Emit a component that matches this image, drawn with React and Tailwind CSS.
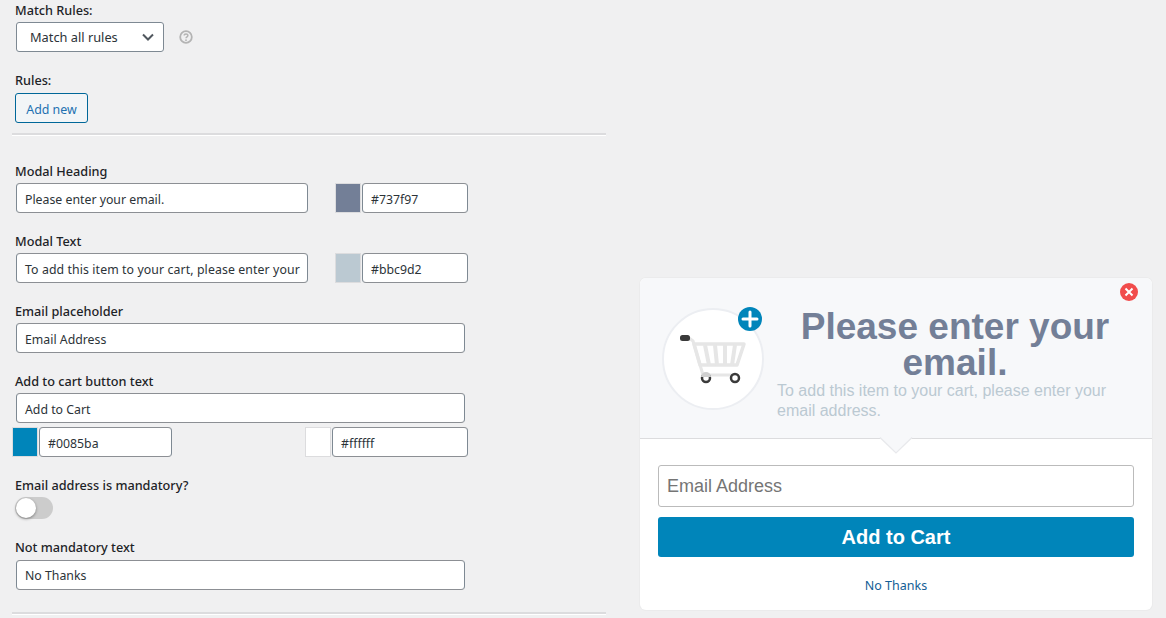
import React from "react";

const Label = ({ children, className = "" }) => (
  <div className={`text-[12.7px] leading-[18px] font-medium text-[#1d2327] ${className}`}>{children}</div>
);

const Field = ({ children, className = "" }) => (
  <div className={`h-[30px] bg-white border border-[#8c8f94] border-x-[#7e8993] rounded-[4px] px-2 text-[12.3px] leading-[31px] text-[#2c3338] overflow-hidden whitespace-nowrap ${className}`}>
    {children}
  </div>
);

const ColorField = ({ color, value, fieldWidth, className = "" }) => (
  <div className={`flex h-[30px] gap-px ${className}`}>
    <div className="w-[26px] h-[30px] border border-[#dcdcde]" style={{ backgroundColor: color }} />
    <Field className={fieldWidth}>{value}</Field>
  </div>
);

const CartIcon = () => (
  <svg width="102" height="102" viewBox="0 0 102 102" className="block">
    <circle cx="51" cy="51" r="50" fill="#ffffff" stroke="#eceef2" strokeWidth="2" />
    <path d="M27 30 L31 33 L41 67 H76" fill="none" stroke="#e6e6e6" strokeWidth="3" />
    <path d="M32 36 H82 L75 57 H38 Z" fill="none" stroke="#e6e6e6" strokeWidth="3.5" strokeLinejoin="round" />
    <path d="M43 37 L47 57 M53 37 L55 57 M63 37 L63 57 M73 37 L70 57" stroke="#e6e6e6" strokeWidth="4" fill="none" />
    <rect x="18" y="27" width="10" height="6" rx="2.5" fill="#3a3a3a" />
    <circle cx="44" cy="70" r="4" fill="#ffffff" stroke="#3a3a3a" strokeWidth="2.5" />
    <path d="M39 69 A5 5 0 0 1 49 69 Z" fill="#cfcfcf" />
    <circle cx="73" cy="70" r="4" fill="#ffffff" stroke="#3a3a3a" strokeWidth="2.5" />
  </svg>
);

const PlusBadge = () => (
  <svg width="24" height="24" viewBox="0 0 24 24" className="absolute left-[76px] top-[-1px]">
    <circle cx="12" cy="12" r="12" fill="#0085ba" />
    <path d="M12 5 V19 M5 12 H19" stroke="#ffffff" strokeWidth="3" strokeLinecap="round" />
  </svg>
);

export default function App() {
  return (
    <div className="flex h-[618px] w-[1166px] overflow-hidden bg-[#f0f0f1] [font-family:'Noto_Sans','Open_Sans',sans-serif]">
      <div className="w-[606px] shrink-0 pl-3">
        <Label className="pl-[3px] pt-px">Match Rules:</Label>
        <div className="flex items-center mt-[3px] ml-1">
          <div className="w-[148px] h-[30px] flex items-center justify-between bg-white border border-[#7e8993] rounded-[3px] pl-[13px] pr-[9px] text-[12.8px] leading-[30px] text-[#2c3338]">
            <span>Match all rules</span>
            <svg width="12" height="8" viewBox="0 0 12 8"><path d="M1 1.5 L6 6.5 L11 1.5" fill="none" stroke="#50575e" strokeWidth="2" /></svg>
          </div>
          <svg width="14" height="14" viewBox="0 0 14 14" className="ml-[15px]">
            <circle cx="7" cy="7" r="5.8" fill="none" stroke="#b4b4b4" strokeWidth="1.8" />
            <path d="M5.2 5.6 C5.2 3.4 8.9 3.4 8.9 5.5 C8.9 6.9 7 6.8 7 8.3" fill="none" stroke="#b4b4b4" strokeWidth="1.5" />
            <circle cx="7" cy="10.2" r="0.9" fill="#b4b4b4" />
          </svg>
        </div>
        <Label className="pl-[3px] mt-[19px]">Rules:</Label>
        <div className="mt-[4px] ml-[3px] w-[73px] h-[30px] bg-[#f2f5f7] border border-[#006799] rounded-[3px] text-center text-[12.4px] leading-[31px] text-[#2271b1]">
          Add new
        </div>
        <div className="mt-[10px] h-[3px] border-t-2 border-[#dcdcde] bg-white" />

        <Label className="pl-[3px] mt-[26px]">Modal Heading</Label>
        <div className="flex mt-[3px] ml-1 items-center">
          <Field className="w-[292px]">Please enter your email.</Field>
          <ColorField color="#737f97" value="#737f97" fieldWidth="w-[106px]" className="ml-[27px]" />
        </div>

        <Label className="pl-[3px] mt-[19px]">Modal Text</Label>
        <div className="flex mt-[3px] ml-1 items-center">
          <Field className="w-[292px] tracking-[0.1px]">To add this item to your cart, please enter your</Field>
          <ColorField color="#bbc9d2" value="#bbc9d2" fieldWidth="w-[106px]" className="ml-[27px]" />
        </div>

        <Label className="pl-[3px] mt-[19px]">Email placeholder</Label>
        <Field className="w-[449px] mt-[3px] ml-1">Email Address</Field>

        <Label className="pl-[3px] mt-[19px]">Add to cart button text</Label>
        <Field className="w-[449px] mt-[3px] ml-1">Add to Cart</Field>
        <div className="flex mt-[4px]">
          <ColorField color="#0085ba" value="#0085ba" fieldWidth="w-[133px]" />
          <ColorField color="#ffffff" value="#ffffff" fieldWidth="w-[136px]" className="ml-[133px]" />
        </div>

        <Label className="pl-[3px] mt-[19px]">Email address is mandatory?</Label>
        <div className="relative w-[38px] h-[22px] mt-[3px] ml-[3px] rounded-full bg-[#cccccc]">
          <div className="absolute left-[1px] top-[1px] w-5 h-5 rounded-full bg-white shadow-[0_1px_3px_rgba(0,0,0,0.4)]" />
        </div>

        <Label className="pl-[3px] mt-[19px]">Not mandatory text</Label>
        <Field className="w-[449px] mt-[4px] ml-1 !leading-[29px]">No Thanks</Field>
        <div className="mt-[22px] h-[3px] border-t-2 border-[#dcdcde] bg-white" />
      </div>

      <div className="ml-[34px] mt-[278px] w-[512px] h-[332px] shrink-0 flex flex-col bg-white rounded-[6px] shadow-[0_0_0_1px_#ebebec] [font-family:'Liberation_Sans',Arial,sans-serif]">
        <div className="relative h-[161px] shrink-0 flex bg-[#f7f8fa] rounded-t-[6px] border-b border-[#dcdcde] pl-[22px] pt-[30px]">
          <div className="relative w-[102px] h-[102px] shrink-0">
            <CartIcon />
            <PlusBadge />
          </div>
          <div className="ml-[13px] w-[356px]">
            <div className="text-center text-[37px] leading-[36px] font-bold text-[#737f97] pt-px">Please enter your email.</div>
            <div className="text-[16px] leading-[20px] text-[#bbc9d2]">To add this item to your cart, please enter your email address.</div>
          </div>
          <div className="absolute right-[14px] top-[5px] w-[18px] h-[18px] rounded-full bg-[#f14c4c] flex items-center justify-center">
            <svg width="10" height="10" viewBox="0 0 10 10"><path d="M1.5 1.5 L8.5 8.5 M8.5 1.5 L1.5 8.5" stroke="#ffffff" strokeWidth="2" /></svg>
          </div>
          <svg width="34" height="17" viewBox="0 0 34 17" className="absolute left-[239px] bottom-[-16px]">
            <path d="M0 0 L17 16 L34 0 Z" fill="#f7f8fa" />
            <path d="M1 0.5 L17 16 L33 0.5" fill="none" stroke="#e8e9ec" strokeWidth="1.2" />
          </svg>
        </div>
        <div className="mt-[26px] mx-[18px] h-[42px] bg-white border border-[#bbbbbb] rounded-[3px] px-2 text-[18px] leading-[40px] text-[#757575]">Email Address</div>
        <div className="mt-[10px] mx-[18px] h-[40px] bg-[#0085ba] rounded-[3px] text-center text-[20px] leading-[40px] font-bold text-white">Add to Cart</div>
        <div className="mt-[20px] text-center text-[12.5px] leading-[18px] text-[#135e96] [font-family:'Noto_Sans',sans-serif]">No Thanks</div>
      </div>
    </div>
  );
}
